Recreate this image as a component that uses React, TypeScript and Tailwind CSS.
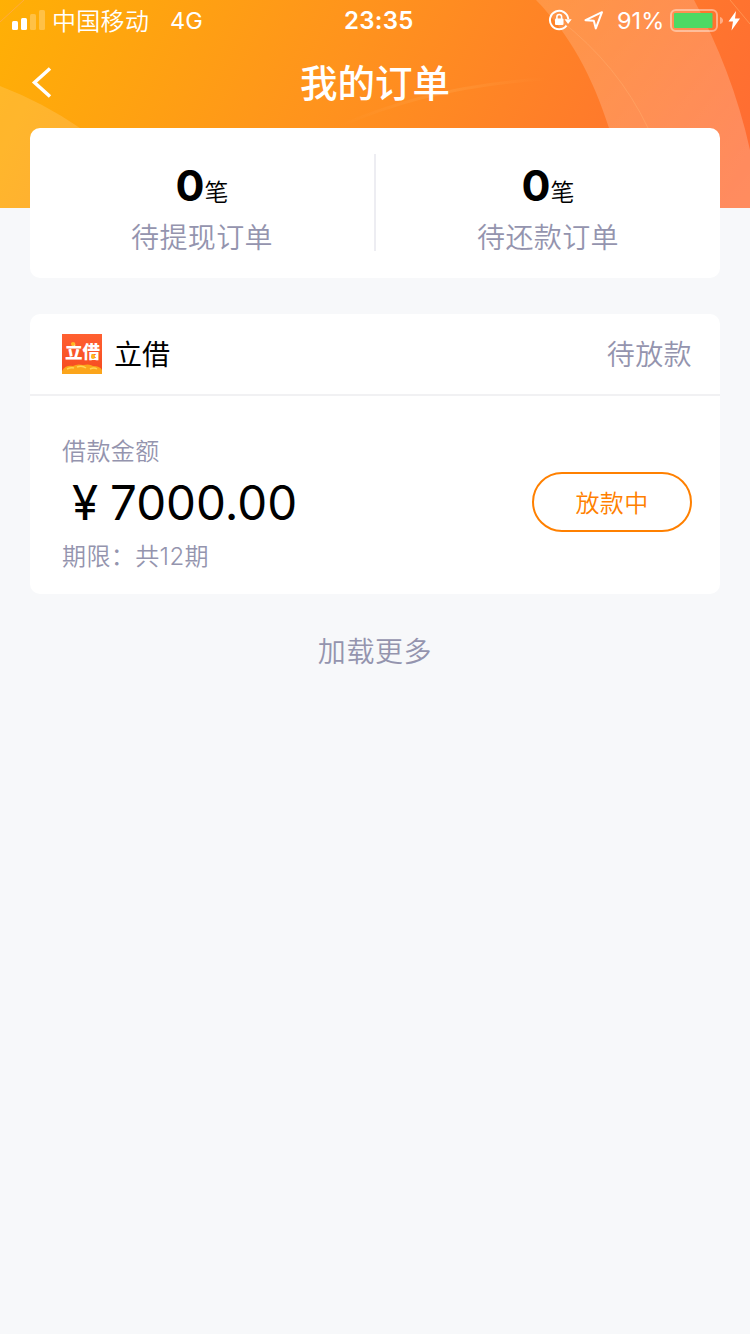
import type { ReactNode } from "react";

const summary = [
  { count: 0, label: "待提现订单" },
  { count: 0, label: "待还款订单" },
];

function HeaderBackground() {
  return (
    <svg className="absolute inset-x-0 top-0 h-[208px] w-full" viewBox="0 0 750 208" fill="none" aria-hidden="true">
      <defs>
        <linearGradient id="header" x1="0" y1="0" x2="660" y2="330" gradientUnits="userSpaceOnUse">
          <stop offset="0" stopColor="#ffb005" />
          <stop offset="0.45" stopColor="#ff931d" />
          <stop offset="1" stopColor="#ff6c33" />
        </linearGradient>
        <linearGradient id="band" x1="540" y1="0" x2="750" y2="208" gradientUnits="userSpaceOnUse">
          <stop offset="0" stopColor="#fff" stopOpacity="0.15" />
          <stop offset="1" stopColor="#fff" stopOpacity="0.22" />
        </linearGradient>
        <linearGradient id="streak" x1="340" y1="0" x2="545" y2="0" gradientUnits="userSpaceOnUse">
          <stop offset="0" stopColor="#ffa64d" stopOpacity="0" />
          <stop offset="0.5" stopColor="#ffa64d" stopOpacity="0.35" />
          <stop offset="1" stopColor="#ffa64d" stopOpacity="0" />
        </linearGradient>
      </defs>
      <path d="M0 0h750v208H0z" fill="url(#header)" />
      <path d="M0 86Q42 102 80 128V208H0z" fill="#fff" fillOpacity="0.14" />
      <path d="M536 0C570 35 592 75 609 128L625 208H750V150C738 95 718 45 694 0z" fill="url(#band)" />
      <path d="M560 20Q618 65 648 128M730 0L750 24M0 22L24 0" stroke="#ffa868" strokeOpacity="0.6" />
      <path d="M340 126Q430 86 545 79" stroke="url(#streak)" strokeWidth="3" />
    </svg>
  );
}

function StatusBar() {
  return (
    <div className="flex h-10 items-center text-2xl leading-10 text-white">
      <svg className="ml-3 h-5 w-[34px]" viewBox="0 0 34 20" fill="#fff">
        <rect x="0" y="11" width="6" height="9" rx="1.5" />
        <rect x="9" y="8" width="6" height="12" rx="1.5" />
        <rect x="18" y="4" width="6" height="16" rx="1.5" fillOpacity="0.25" />
        <rect x="27" y="0" width="6" height="20" rx="1.5" fillOpacity="0.25" />
      </svg>
      <span className="ml-[6px] w-[118px] whitespace-nowrap pt-[3px] font-[350] tracking-[0.3px]">中国移动</span>
      <span className="w-[174px] pt-[2px] text-[23.500px]">4G</span>
      <span className="w-[204px] pt-[2px] font-semibold tracking-[0.3px]">23:35</span>
      <svg className="h-6 w-6 shrink-0" viewBox="0 0 24 24" fill="none">
        <path d="M18.5 17.6A9.2 9.2 0 1 1 20.3 11" stroke="#fff" strokeWidth="2" />
        <path d="M16.5 11.3h7.2l-3.6 4.6z" fill="#fff" />
        <rect x="7" y="10.5" width="8.5" height="6.5" rx="1" fill="#fff" />
        <path d="M8.900 11V8.800a2.350 2.350 0 0 1 4.700 0V11" stroke="#fff" strokeWidth="1.6" />
      </svg>
      <svg className="ml-3 h-5 w-5 shrink-0" viewBox="0 0 20 20" fill="none">
        <path d="M1.5 10.2L18 2.2L11.8 18.4L9.8 10.7z" stroke="#fff" strokeWidth="2" strokeLinejoin="round" />
      </svg>
      <span className="ml-[13px] w-[53px] pt-[2px] text-[23.500px]">91%</span>
      <svg className="h-6 w-[72px] shrink-0" viewBox="0 0 72 24" fill="none">
        <rect x="1" y="2" width="46" height="21" rx="5" stroke="#fff" strokeOpacity="0.42" strokeWidth="2" />
        <rect x="4" y="5" width="38.5" height="15" rx="1" fill="#4cd964" />
        <path d="M50 9q3 1 3 3.500t-3 3.500z" fill="#fff" fillOpacity="0.42" />
        <path d="M66 3L58.500 13.500H63L61.500 22.500L70 10.500H65z" fill="#fff" />
      </svg>
    </div>
  );
}

function NavBar() {
  return (
    <div className="relative flex h-[88px] items-center justify-center">
      <button aria-label="返回" className="absolute left-[30px] top-[26px]">
        <svg className="h-8 w-6" viewBox="0 0 24 32" fill="none">
          <path d="M20 2.500L4.500 16.500L20 30.500" stroke="#fff" strokeWidth="3.500" />
        </svg>
      </button>
      <h1 className="text-[37.500px] font-medium leading-none text-white">我的订单</h1>
    </div>
  );
}

function Card({ className, children }: { className: string; children: ReactNode }) {
  return <section className={`mx-[30px] rounded-[10px] bg-white ${className}`}>{children}</section>;
}

function SummaryItem({ count, label }: { count: number; label: string }) {
  return (
    <div className="flex flex-1 flex-col items-center pt-[33px]">
      <div className="flex h-[50px] items-baseline leading-[48px] text-black">
        <span className="text-[43px] font-bold">{count}</span>
        <span className="text-2xl font-[350] leading-none">笔</span>
      </div>
      <div className="mt-[7px] text-[28px] font-[350] leading-10 tracking-[0.4px] text-[#9494ae]">{label}</div>
    </div>
  );
}

function AppLogo() {
  return (
    <div className="relative h-10 w-10 overflow-hidden bg-gradient-to-b from-[#ff6031] to-[#f54a1f]">
      <svg className="absolute inset-0 h-10 w-10" viewBox="0 0 40 40">
        <path d="M0 37Q3 31 11 32Q15 29.500 21 31Q28 29.500 31 32Q38 32 40 36V40H0z" fill="#fba51b" />
        <path d="M5 35q4-2 7-1M15 33q5-2 9 1M28 35q4-2 7 0" stroke="#ffd552" strokeWidth="1.500" fill="none" />
      </svg>
      <span className="absolute left-[3px] top-[8px] text-[17.500px] font-black leading-[20px] text-white">立借</span>
      <span className="absolute left-[9px] top-[8px] h-1 w-1 rounded-full bg-[#ffb81f]" />
      <span className="absolute left-[29px] top-[20px] h-[5px] w-1 rounded-full bg-[#ffb81f]" />
    </div>
  );
}

export default function App() {
  return (
    <div className="relative h-[1334px] w-[750px] overflow-hidden bg-[#f7f8fa] font-['Inter','Noto_Sans_CJK_SC',sans-serif]">
      <HeaderBackground />
      <main className="relative">
        <StatusBar />
        <NavBar />

        <Card className="flex h-[150px]">
          <SummaryItem {...summary[0]} />
          <div className="mt-[26px] h-[97px] w-[2px] bg-[#ededf2]" />
          <SummaryItem {...summary[1]} />
        </Card>

        <Card className="mt-9 h-[280px]">
          <div className="flex h-[82px] items-center border-b-2 border-[#f1f1f3] pl-8 pr-7">
            <AppLogo />
            <span className="ml-3 pt-[2px] text-[28px] leading-10 text-black">立借</span>
            <span className="ml-auto pt-[2px] text-[28px] font-[350] leading-10 tracking-[0.4px] text-[#9494ae]">待放款</span>
          </div>
          <div className="flex items-start justify-between pl-8 pr-7 pt-[39px]">
            <div className="text-2xl font-[350] tracking-[0.4px] text-[#9494ae]">
              <p className="h-[34px] leading-[34px]">借款金额</p>
              <p className="flex h-[68px] items-center text-[47.500px] font-normal leading-[68px] tracking-normal text-black">
                <span className="w-[48px] pl-[10px]">¥</span>
                <span>7000.00</span>
              </p>
              <p className="mt-[2px] h-9 leading-9">期限：共12期</p>
            </div>
            <button className="mt-[37px] h-[60px] w-40 rounded-full border-2 border-[#ff8000] pt-[3px] text-2xl font-[350] tracking-[0.4px] text-[#ff8000]">
              放款中
            </button>
          </div>
        </Card>

        <button className="mt-[38px] block w-full text-center text-[28px] font-[350] leading-10 tracking-[0.6px] text-[#9494ae]">
          加载更多
        </button>
      </main>
    </div>
  );
}
